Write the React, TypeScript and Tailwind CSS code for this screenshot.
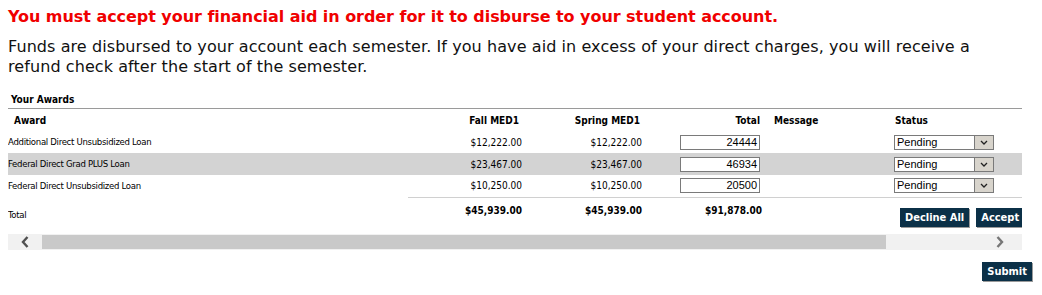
import React from "react";

const awards = [
  { name: "Additional Direct Unsubsidized Loan", fall: "$12,222.00", spring: "$12,222.00", total: "24444" },
  { name: "Federal Direct Grad PLUS Loan", fall: "$23,467.00", spring: "$23,467.00", total: "46934" },
  { name: "Federal Direct Unsubsidized Loan", fall: "$10,250.00", spring: "$10,250.00", total: "20500" },
];

function StatusSelect() {
  return (
    <div className="flex w-[100px] h-[15px] border border-[#7a7a7a] bg-white">
      <span className="flex-1 pl-[2px] text-[11px] leading-[13px] font-['Liberation_Sans',Arial,sans-serif] text-black">
        Pending
      </span>
      <span className="w-[19px] h-[13px] bg-[#d8d4cc] border-l border-[#7a7a7a] flex items-center justify-center">
        <svg width="8" height="5" viewBox="0 0 8 5" fill="none">
          <path d="M1 1l3 3 3-3" stroke="#222" strokeWidth="1.3" />
        </svg>
      </span>
    </div>
  );
}

function NavyButton({ label }: { label: string }) {
  return (
    <button className="h-[19px] px-[5px] bg-[#0b3047] text-white text-[11px] font-bold leading-[19px] shadow-[1px_1px_0_#9a9a9a] whitespace-nowrap">
      {label}
    </button>
  );
}

export default function App() {
  return (
    <div className="w-[1042px] h-[295px] bg-white overflow-hidden font-['DejaVu_Sans',Verdana,sans-serif] text-black">
      <div className="pl-2 pt-[7px]">
        <h2 className="text-[16px] leading-[20px] font-bold text-[#f00000] tracking-[-0.05px]">
          You must accept your financial aid in order for it to disburse to your student account.
        </h2>
        <p className="mt-[10px] w-[990px] text-[16px] leading-[20px] text-[#111] tracking-[0.08px]">
          Funds are disbursed to your account each semester. If you have aid in excess of your direct charges, you will receive a refund check after the start of the semester.
        </p>

        <div className="mt-[15px] w-[1014px] overflow-hidden font-['DejaVu_Sans_Condensed','DejaVu_Sans',sans-serif]">
          <div className="pl-[3px] h-[17px] leading-[16px] text-[10px] font-bold border-b border-[#9a9a9a]">
            Your Awards
          </div>
          <table className="table-fixed border-collapse w-[1014px] text-[10px]">
            <colgroup>
              <col className="w-[400px]" />
              <col className="w-[117px]" />
              <col className="w-[120px]" />
              <col className="w-[121px]" />
              <col className="w-[120px]" />
              <col className="w-[136px]" />
            </colgroup>
            <thead>
              <tr className="h-[22px] font-bold">
                <th className="text-left pl-[6px] font-bold">Award</th>
                <th className="text-right pr-[6px] font-bold">Fall MED1</th>
                <th className="text-right pr-[5px] font-bold">Spring MED1</th>
                <th className="text-right pr-[6px] font-bold">Total</th>
                <th className="text-left pl-[8px] font-bold">Message</th>
                <th className="text-left pl-[9px] font-bold">Status</th>
              </tr>
            </thead>
            <tbody>
              {awards.map((a, i) => (
                <tr key={a.name} className={i === 1 ? "h-[22px] bg-[#d3d3d3]" : "h-[22px]"}>
                  <td className="pl-0 align-middle text-[9.5px] tracking-[-0.3px]">{a.name}</td>
                  <td className="text-right pr-[3px] align-middle">{a.fall}</td>
                  <td className="text-right pr-[3px] align-middle">{a.spring}</td>
                  <td className="pr-[6px] align-middle">
                    <div className="ml-auto w-[80px] h-[15px] border border-[#7a7a7a] bg-white text-right pr-[2px] text-[11px] leading-[13px] font-['Liberation_Sans',Arial,sans-serif]">
                      {a.total}
                    </div>
                  </td>
                  <td />
                  <td className="pl-[8px] align-middle">
                    <StatusSelect />
                  </td>
                </tr>
              ))}
              <tr className="h-[37px]">
                <td className="align-middle text-[9.5px] tracking-[-0.3px]">Total</td>
                <td className="border-t border-[#d0d0d0] text-right pr-[3px] align-top pt-[5px] font-bold">$45,939.00</td>
                <td className="border-t border-[#d0d0d0] text-right pr-[3px] align-top pt-[5px] font-bold">$45,939.00</td>
                <td className="border-t border-[#d0d0d0] text-right pr-[4px] align-top pt-[5px] font-bold">$91,878.00</td>
                <td className="border-t border-[#d0d0d0]" />
                <td className="border-t border-[#d0d0d0] align-middle pt-[4px]">
                  <div className="flex gap-[7px] pl-[14px]">
                    <NavyButton label="Decline All" />
                    <NavyButton label="Accept" />
                  </div>
                </td>
              </tr>
            </tbody>
          </table>
        </div>

        {/* horizontal scrollbar of the awards table */}
        <div className="w-[1014px] h-[16px] bg-[#f1f1f1] flex items-center">
          <span className="w-[34px] flex justify-center">
            <svg width="8" height="12" viewBox="0 0 8 12" fill="none">
              <path d="M6.5 1L2 6l4.5 5" stroke="#505050" strokeWidth="2.4" />
            </svg>
          </span>
          <div className="w-[844px] h-[14px] bg-[#c9c9c9]" />
          <span className="flex-1 flex justify-end pr-[18px]">
            <svg width="8" height="12" viewBox="0 0 8 12" fill="none">
              <path d="M1.5 1L6 6l-4.5 5" stroke="#777" strokeWidth="2.4" />
            </svg>
          </span>
        </div>

        <div className="flex justify-end w-[1024px] mt-[12px] font-['DejaVu_Sans_Condensed','DejaVu_Sans',sans-serif]">
          <NavyButton label="Submit" />
        </div>
      </div>
    </div>
  );
}
